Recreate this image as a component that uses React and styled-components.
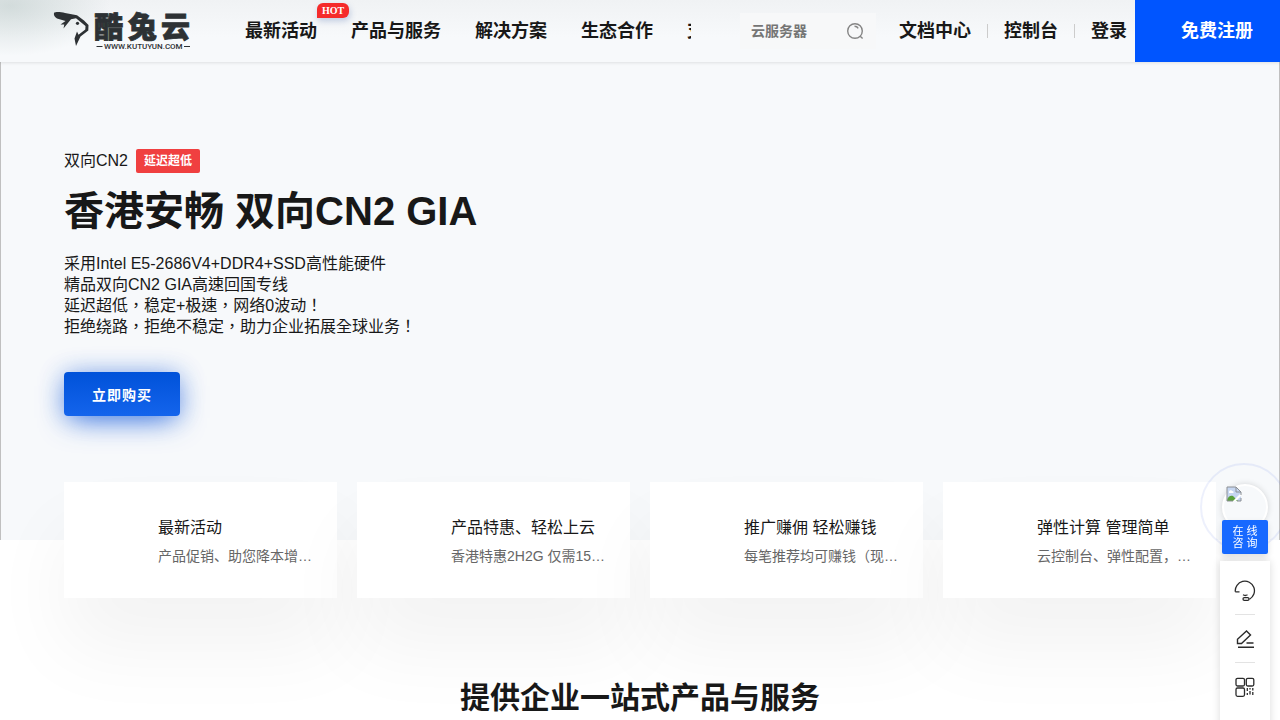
import React from 'react';
import styled, { createGlobalStyle } from 'styled-components';

const navItems = [
    { label: '最新活动', hot: true },
    { label: '产品与服务' },
    { label: '解决方案' },
    { label: '生态合作' },
    { label: '支持' },
];

const cards = [
    { title: '最新活动', text: '产品促销、助您降本增效，轻松上云' },
    { title: '产品特惠、轻松上云', text: '香港特惠2H2G 仅需15元/月起' },
    { title: '推广赚佣 轻松赚钱', text: '每笔推荐均可赚钱（现金奖励）' },
    { title: '弹性计算 管理简单', text: '云控制台、弹性配置，一键管理' },
];

const Logo = () => (
    <LogoSvg viewBox="0 0 140 40" role="img" aria-label="酷兔云">
        <path
            d="M1 1.700C3 .5 8 1 12 2L24 4.300 31 9.500 35.500 14 35.300 19.500 27.500 25.500 23 35 21.500 27.500 24 20.500 25.500 23.700 32.300 18.500 32.500 15 23 7.300 18 8.300 10.500 17.500 11.300 13.500 7.500 13.500 12.500 10 4 7.500C1.500 6 .5 4 1 1.700Z"
            fill="#2d3134"
        />
        <circle cx="24.500" cy="12.300" r="1.600" fill="#2d3134" />
        <LogoName x="41 75 108" y="27">酷兔云</LogoName>
        <path d="M43.500 35.500h6M131 35.500h6" stroke="#2d3134" strokeWidth="1" />
        <LogoUrl x="51" y="38">WWW.KUTUYUN.COM</LogoUrl>
    </LogoSvg>
);

const SearchIcon = () => (
    <svg width="18" height="18" viewBox="0 0 18 18" fill="none" stroke="#858585" strokeWidth="1.400">
        <circle cx="9" cy="9" r="7.300" />
        <path d="M8.500 4.300c2 0 3 .7 3.700 2M14.200 14.200l2.400 2.300" />
    </svg>
);

const BrokenImage = () => (
    <svg width="16" height="16" viewBox="0 0 16 16">
        <path d="M1 1h9l5 5v9H1z" fill="#c6d6f1" />
        <path d="M1 14c1-4 4-5 6-4l5 5H1z" fill="#5aa13c" />
        <path d="M3 6c0-2 3-2 3-1 2 0 2 2 1 2H3z" fill="#fff" />
        <path d="M7 15l8-8v3l-5 5z" fill="#fff" />
        <path d="M1 15V1h9l5 5v3M10 1v5h5M1 15h6M11 15h4v-3" fill="none" stroke="#8b8f94" />
    </svg>
);

const ServiceIcon = () => (
    <svg width="22" height="22" viewBox="0 0 22 22" fill="none" stroke="#2b2b2b" strokeWidth="1.300">
        <path d="M1.300 11.800h4.200M1.300 11.800A9.600 9.600 0 1 1 15.500 19.200" />
        <path d="M9 14.800c1.500.9 3 .9 4.500 0" />
        <rect x="9" y="17.700" width="6" height="2.600" rx="1.300" />
    </svg>
);

const EditIcon = () => (
    <svg width="22" height="22" viewBox="0 0 22 22" fill="none" stroke="#2b2b2b" strokeWidth="1.400">
        <path d="M3.500 15.500v-4.300l9-8.200 4 4-9 8.500zM12.500 15h7M4 19.200h16" />
    </svg>
);

const QrIcon = () => (
    <svg width="22" height="22" viewBox="0 0 22 22" fill="none" stroke="#2b2b2b" strokeWidth="1.300">
        <rect x="2" y="2.300" width="8.500" height="7.700" rx="1.500" />
        <rect x="12.300" y="2.300" width="7.500" height="7.700" rx="1.500" />
        <rect x="2" y="12" width="8.500" height="8.300" rx="1.500" />
        <path d="M13.300 12v3M13.300 17v2M16 12v1.500M16 15v3.500M18.800 12v2.500M18.800 16v3" />
    </svg>
);

const App = () => {
    return (
        <>
            <GlobalStyle />
            <Header>
                <LogoLink href="#"><Logo /></LogoLink>
                <Nav>
                    {navItems.map((item) => (
                        <NavLink key={item.label} href="#">
                            {item.label}
                            {item.hot && <Hot>HOT</Hot>}
                        </NavLink>
                    ))}
                </Nav>
                <Search>
                    <SearchInput aria-label="搜索" placeholder="云服务器" />
                    <SearchButton aria-label="搜索"><SearchIcon /></SearchButton>
                </Search>
                <Links>
                    <TopLink href="#">文档中心</TopLink>
                    <TopLink href="#">控制台</TopLink>
                    <TopLink href="#">登录</TopLink>
                </Links>
                <Register href="#">免费注册</Register>
            </Header>
            <Hero>
                <Tagline>双向CN2 <Badge>延迟超低</Badge></Tagline>
                <HeroTitle>香港安畅 双向CN2 GIA</HeroTitle>
                <HeroText>
                    采用Intel E5-2686V4+DDR4+SSD高性能硬件<br />
                    精品双向CN2 GIA高速回国专线<br />
                    延迟超低，稳定+极速，网络0波动！<br />
                    拒绝绕路，拒绝不稳定，助力企业拓展全球业务！
                </HeroText>
                <BuyButton>立即购买</BuyButton>
            </Hero>
            <Cards>
                {cards.map((card) => (
                    <Card key={card.title} href="#">
                        <CardTitle>{card.title}</CardTitle>
                        <CardText>{card.text}</CardText>
                    </Card>
                ))}
            </Cards>
            <SectionTitle>提供企业一站式产品与服务</SectionTitle>
            <Floating>
                <Consult>
                    <Ring />
                    <Avatar><BrokenImage /></Avatar>
                    <ConsultLabel>在 线<br />咨 询</ConsultLabel>
                </Consult>
                <Tools>
                    <Tool aria-label="客服"><ServiceIcon /></Tool>
                    <Tool aria-label="反馈"><EditIcon /></Tool>
                    <Tool aria-label="二维码"><QrIcon /></Tool>
                </Tools>
            </Floating>
        </>
    );
};

const GlobalStyle = createGlobalStyle`
    * {
        box-sizing: border-box;
    }

    body {
        margin: 0;
        background: #fff;
        color: #181818;
        font-family: 'Liberation Sans', 'Noto Sans CJK SC', sans-serif;
        font-size: 16px;
    }

    a {
        color: inherit;
        text-decoration: none;
    }

    button, input {
        font-family: inherit;
        border: 0;
        padding: 0;
        background: none;
    }

    button {
        cursor: pointer;
    }
`;

const Header = styled.header`
    position: sticky;
    top: 0;
    z-index: 10;
    display: flex;
    align-items: center;
    height: 62px;
    background:
        radial-gradient(ellipse 100px 50px at 10px 6px, rgba(180, 196, 194, 0.5), transparent),
        linear-gradient(#f0f2f4, #f7f9fb 60%);
    box-shadow: 0 1px 3px rgba(0, 0, 0, 0.1);
`;

const LogoLink = styled.a`
    display: flex;
    padding: 0 52px 0 53px;
`;

const LogoSvg = styled.svg`
    width: 140px;
    height: 40px;
`;

const LogoName = styled.text`
    font-size: 29px;
    font-weight: 900;
    fill: #2d3134;
    stroke: #2d3134;
    stroke-width: 0.8px;
`;

const LogoUrl = styled.text`
    font-family: Roboto, sans-serif;
    font-size: 8px;
    font-weight: 500;
    fill: #2d3134;
`;

const Nav = styled.nav`
    flex: 1;
    display: flex;
    align-items: center;
    gap: 34px;
    height: 62px;
    min-width: 0;
    overflow: hidden;
`;

const NavLink = styled.a`
    position: relative;
    flex: none;
    font-size: 18px;
    font-weight: bold;
    line-height: 24px;
`;

const Hot = styled.span`
    position: absolute;
    left: 100%;
    bottom: 25px;
    padding: 0 5px;
    border-radius: 6px 6px 6px 0;
    background: #f52b2b;
    box-shadow: 1px 3px 6px rgba(40, 80, 160, 0.25);
    color: #fff;
    font-family: 'Liberation Serif', serif;
    font-size: 10px;
    line-height: 15px;
`;

const Search = styled.form`
    display: flex;
    align-items: center;
    justify-content: space-between;
    width: 136px;
    height: 36px;
    margin: 0 23px 0 49px;
    padding: 0 12px 0 11px;
    background: #f7f8f9;
`;

const SearchInput = styled.input`
    width: 80px;
    font-size: 14px;
    font-weight: bold;
    outline: none;

    &::placeholder {
        color: #757575;
    }
`;

const SearchButton = styled.button`
    display: flex;
`;

const Links = styled.div`
    display: flex;
    align-items: center;
`;

const TopLink = styled.a`
    display: flex;
    align-items: center;
    font-size: 18px;
    font-weight: bold;
    line-height: 24px;

    & + &::before {
        content: '';
        width: 1px;
        height: 14px;
        margin: 0 16px;
        background: #ccc;
    }
`;

const Register = styled.a`
    width: 145px;
    margin-left: 8px;
    padding-left: 46px;
    background: #0055ff;
    color: #fff;
    font-size: 18px;
    font-weight: bold;
    line-height: 62px;
`;

const Hero = styled.section`
    height: 478px;
    padding: 87px 63px 0;
    border: solid #c0c0c0;
    border-width: 0 1px;
    background: #f7f9fb;
`;

const Tagline = styled.div`
    display: flex;
    align-items: center;
    gap: 8px;
    line-height: 24px;
`;

const Badge = styled.span`
    padding: 0 8px;
    border-radius: 2px;
    background: #f04040;
    color: #fff;
    font-size: 12px;
    font-weight: bold;
`;

const HeroTitle = styled.h1`
    margin: 12px 0 16px;
    font-size: 40px;
    line-height: 52px;
`;

const HeroText = styled.p`
    margin: 0 0 35px;
    font-family: 'Liberation Sans', 'Noto Sans CJK TC', sans-serif;
    line-height: 21px;
`;

const BuyButton = styled.button`
    height: 44px;
    padding: 0 28px;
    border-radius: 4px;
    background: linear-gradient(#0052d9, #1464ec);
    box-shadow: 0 8px 30px -6px rgba(20, 90, 220, 0.8), 0 0 24px rgba(20, 90, 220, 0.3);
    color: #fff;
    font-size: 14px;
    font-weight: bold;
    letter-spacing: 1px;
`;

const Cards = styled.section`
    position: relative;
    display: grid;
    grid-template-columns: repeat(4, minmax(0, 1fr));
    gap: 20px;
    margin-top: -58px;
    padding: 0 64px;
`;

const Card = styled.a`
    height: 116px;
    padding: 34px 24px 0 94px;
    background: #fff;
    box-shadow: 0 50px 80px rgba(0, 0, 0, 0.05);
`;

const CardTitle = styled.h3`
    margin: 0 0 6px;
    font-size: 16px;
    font-weight: normal;
    line-height: 24px;
`;

const CardText = styled.p`
    margin: 0;
    overflow: hidden;
    color: #666;
    font-size: 14px;
    line-height: 20px;
    text-overflow: ellipsis;
    white-space: nowrap;
`;

const SectionTitle = styled.h2`
    position: relative;
    margin: 80px 0 0;
    font-size: 30px;
    line-height: 40px;
    text-align: center;
`;

const Floating = styled.aside`
    position: fixed;
    top: 484px;
    right: 10px;
    z-index: 5;
    width: 50px;
`;

const Consult = styled.div`
    position: relative;
    display: flex;
    flex-direction: column;
    align-items: center;
`;

const Ring = styled.span`
    position: absolute;
    top: -21px;
    left: -20px;
    width: 88px;
    height: 88px;
    border: 2px solid rgba(80, 110, 230, 0.1);
    border-radius: 50%;
`;

const Avatar = styled.span`
    position: relative;
    width: 46px;
    height: 46px;
    padding: 0 2px;
    border: 2px solid #fff;
    border-radius: 50%;
    background: #f7f9fb;
    box-shadow: 0 0 6px rgba(0, 0, 0, 0.15);
`;

const ConsultLabel = styled.button`
    position: relative;
    width: 46px;
    height: 34px;
    margin-top: -10px;
    border-radius: 2px;
    background: #1769ff;
    box-shadow: 0 3px 6px rgba(0, 0, 0, 0.12);
    color: #fff;
    font-size: 11px;
    line-height: 12px;
`;

const Tools = styled.div`
    position: relative;
    margin-top: 7px;
    padding: 6px 0 36px;
    background: #fff;
    box-shadow: 0 0 8px rgba(0, 0, 0, 0.14);
`;

const Tool = styled.button`
    display: flex;
    align-items: center;
    justify-content: center;
    width: 20px;
    height: 48px;
    margin: 0 auto;
    border-bottom: 1px solid #e3e3e3;

    &:last-child {
        border-bottom: 0;
    }

    svg {
        flex: none;
    }
`;

export default App;
